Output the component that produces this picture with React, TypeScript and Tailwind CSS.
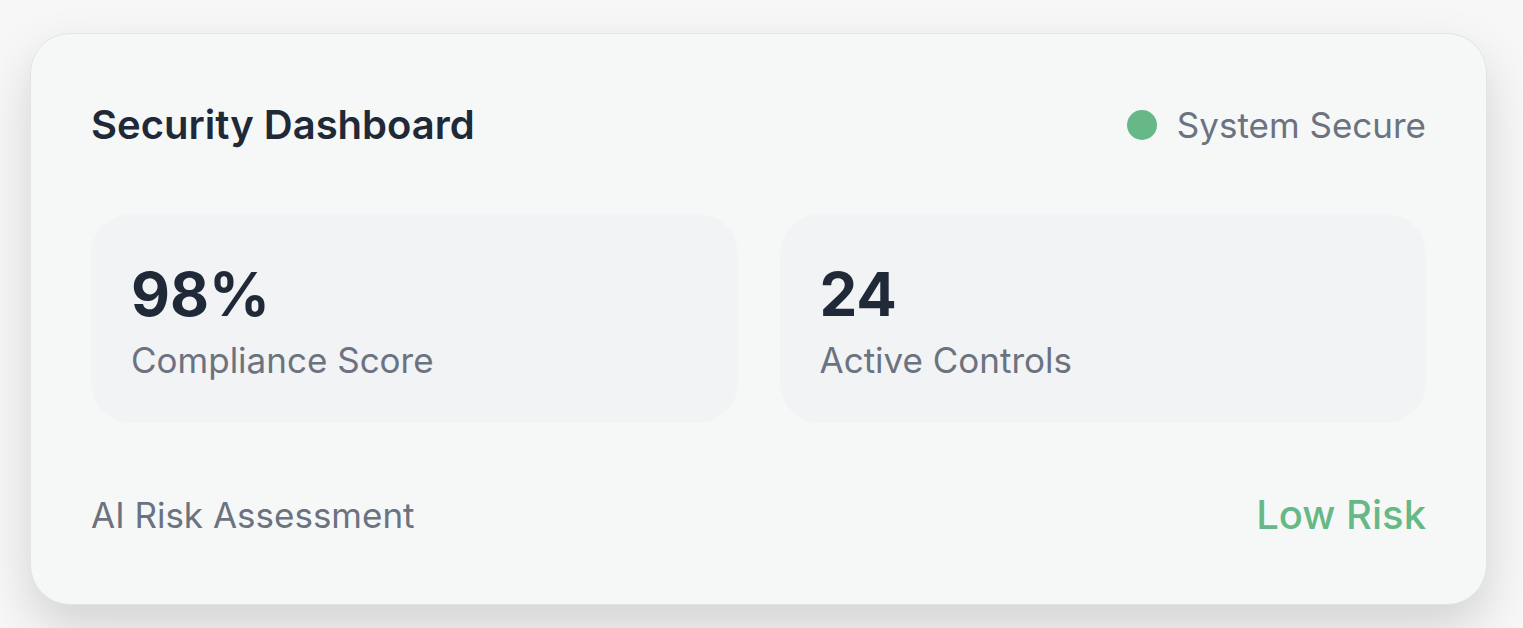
import React from "react";

export default function App() {
  return (
    <div className="min-h-[628px] w-full bg-[#f7f7f7] pl-[30px] pt-[33px]" style={{ fontFamily: "Inter, 'Noto Sans', sans-serif" }}>
      <div className="w-[1457px] h-[572px] rounded-[40px] border border-[#e1e4e8] bg-[#f6f8f8] p-[60px] shadow-[0_22px_50px_rgba(0,0,0,0.15)] flex flex-col">
        <div className="flex items-center justify-between h-[62px]">
          <h1 className="text-[40px] font-semibold text-[#1f2937] leading-none">Security Dashboard</h1>
          <div className="flex items-center gap-[20px]">
            <span className="block w-[30px] h-[30px] rounded-full bg[#66b887] bg-[#66b887]" />
            <span className="text-[35px] text-[#6b7280] leading-none">System Secure</span>
          </div>
        </div>
        <div className="mt-[58px] grid grid-cols-2 gap-[42px]">
          <div className="h-[209px] rounded-[40px] bg-[#f2f3f5] px-[40px] pt-[44px]">
            <div className="text-[60px] font-bold text-[#1f2937] leading-[72px]">98%</div>
            <div className="text-[35px] text-[#6b7280] leading-[52px] mt-[4px]">Compliance Score</div>
          </div>
          <div className="h-[209px] rounded-[40px] bg-[#f2f3f5] px-[40px] pt-[44px]">
            <div className="text-[60px] font-bold text-[#1f2937] leading-[72px]">24</div>
            <div className="text-[35px] text-[#6b7280] leading-[52px] mt-[4px]">Active Controls</div>
          </div>
        </div>
        <div className="mt-auto flex items-center justify-between h-[58px]">
          <span className="text-[35px] text-[#6b7280] leading-none">AI Risk Assessment</span>
          <span className="text-[40px] font-medium text-[#66b887] leading-none">Low Risk</span>
        </div>
      </div>
    </div>
  );
}
